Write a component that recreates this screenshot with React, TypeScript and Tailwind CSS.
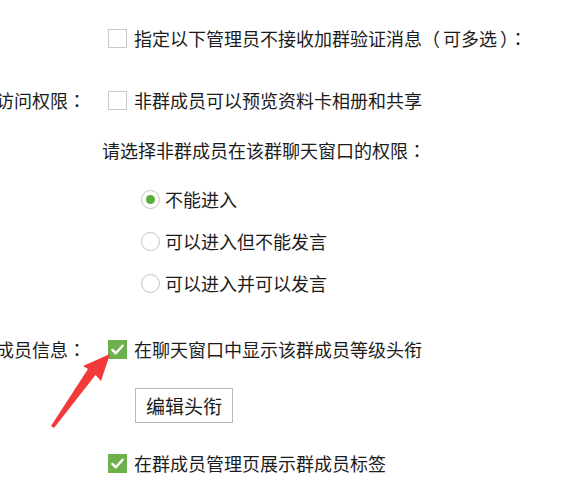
import React from 'react';

const font = { fontFamily: '"Noto Sans CJK SC", "Microsoft YaHei", sans-serif' };
const tcFont = { fontFamily: '"Noto Sans CJK TC", sans-serif' };

// centred full-width punctuation, as in the screenshot
function P({ c, className = '' }: { c: string; className?: string }) {
  return (
    <span className={className} style={tcFont}>
      {c}
    </span>
  );
}

function Box({ checked }: { checked?: boolean }) {
  if (checked) {
    return (
      <span className="flex h-[19px] w-[19px] shrink-0 items-center justify-center bg-[#6cb14b]">
        <svg width="15" height="15" viewBox="0 0 16 16">
          <path d="M2.5 8.5 L6.2 12 L13.5 4" fill="none" stroke="#fff" strokeWidth="2.6" strokeLinecap="round" strokeLinejoin="round" />
        </svg>
      </span>
    );
  }
  return <span className="block h-[19px] w-[19px] shrink-0 border border-[#c9c9c9] bg-white" />;
}

function Radio({ checked }: { checked?: boolean }) {
  return (
    <span className="flex h-[19px] w-[19px] shrink-0 items-center justify-center rounded-full border border-[#c4c4c4] bg-white">
      {checked && <span className="block h-[9px] w-[9px] rounded-full bg-[#58ad36]" />}
    </span>
  );
}

function Row({ label, children, className = '' }: { label?: string; children: React.ReactNode; className?: string }) {
  return (
    <div className={`flex h-[24px] items-center ${className}`}>
      <div className="flex w-[108px] shrink-0 justify-end pr-[22px] whitespace-nowrap">
        {label && (
          <>
            {label}
            <P c="：" />
          </>
        )}
      </div>
      {children}
    </div>
  );
}

const radios = ['不能进入', '可以进入但不能发言', '可以进入并可以发言'];

export default function App() {
  return (
    <div className="relative h-[492px] w-[586px] overflow-hidden bg-white text-[18px] leading-[24px] text-[#1c1c1c]" style={font}>
      <div className="flex flex-col pt-[26px]">
        <Row>
          <Box />
          <span className="ml-[7px] whitespace-nowrap">
            指定以下管理员不接收加群验证消息<P c="（" className="pr-[3px]" />可多选<P c="）" className="pl-[3px]" /><P c="：" />
          </span>
        </Row>

        <Row label="访问权限" className="mt-[38px]">
          <Box />
          <span className="ml-[7px] whitespace-nowrap">非群成员可以预览资料卡相册和共享</span>
        </Row>

        <Row className="mt-[26px]">
          <span className="ml-[-6px] whitespace-nowrap">
            请选择非群成员在该群聊天窗口的权限<P c="：" />
          </span>
        </Row>

        <div className="mt-[25px] flex flex-col gap-[18px]">
          {radios.map((r, i) => (
            <Row key={r}>
              <span className="ml-[33px] flex items-center gap-[5px]">
                <Radio checked={i === 0} />
                <span className="whitespace-nowrap">{r}</span>
              </span>
            </Row>
          ))}
        </div>

        <Row label="成员信息" className="mt-[42px]">
          <Box checked />
          <span className="ml-[7px] whitespace-nowrap">在聊天窗口中显示该群成员等级头衔</span>
        </Row>

        <div className="mt-[27px] flex pl-[135px]">
          <button className="h-[35px] w-[98px] border border-[#b8b8b8] bg-white text-[19px] text-[#1c1c1c]">编辑头衔</button>
        </div>

        <Row className="mt-[28px]">
          <Box checked />
          <span className="ml-[7px] whitespace-nowrap">在群成员管理页展示群成员标签</span>
        </Row>

        <div className="mt-[11px] flex justify-end pr-[14px] text-[14px] text-[#9a9a9a]">
          <span className="whitespace-nowrap">群 成 员 头 衔 设 置</span>
        </div>
      </div>

      {/* red arrow annotation */}
      <svg className="absolute left-0 top-0" width="586" height="492">
        <polygon points="110,354 101,381 95.5,375 54,428 51,426 88,369 83,366" fill="#f23a3a" />
      </svg>
    </div>
  );
}
